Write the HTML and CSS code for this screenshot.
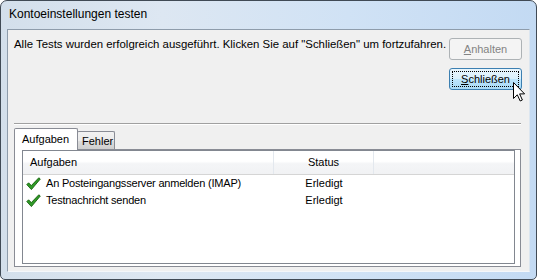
FILE: index.html
```html
<!DOCTYPE html>
<html lang="de">
<head>
<meta charset="utf-8">
<title>Kontoeinstellungen testen</title>
<link rel="stylesheet" href="styles.css">
</head>
<body>
<div class="window">
  <div class="titlebar"><span class="title">Kontoeinstellungen testen</span></div>
  <div class="client">
    <div class="top">
      <p class="message">Alle Tests wurden erfolgreich ausgeführt. Klicken Sie auf "Schließen" um fortzufahren.</p>
      <div class="buttons">
        <button class="btn disabled" disabled><u>A</u>nhalten</button>
        <button class="btn focused"><span class="focus"><u>S</u>chließen</span></button>
      </div>
    </div>
    <div class="sep"></div>
    <div class="tabs">
      <div class="tabstrip">
        <div class="tab active">Aufgaben</div>
        <div class="tab">Fehler</div>
      </div>
      <div class="panel">
        <div class="list">
          <div class="header">
            <div class="hcol c1">Aufgaben</div>
            <div class="hcol c2">Status</div>
            <div class="hcol c3"></div>
          </div>
          <div class="row">
            <div class="cell c1"><svg class="check" width="15" height="14" viewBox="0 0 15 14"><path d="M0.8 7.6 L2.6 5.8 L5.3 8.6 L12.8 0.8 L14.3 2.0 L5.4 12.6 Z" fill="#2f9a27" stroke="#17620f" stroke-width="0.9" stroke-linejoin="round"/></svg><span class="label">An Posteingangsserver anmelden (IMAP)</span></div>
            <div class="cell c2">Erledigt</div>
          </div>
          <div class="row">
            <div class="cell c1"><svg class="check" width="15" height="14" viewBox="0 0 15 14"><path d="M0.8 7.6 L2.6 5.8 L5.3 8.6 L12.8 0.8 L14.3 2.0 L5.4 12.6 Z" fill="#2f9a27" stroke="#17620f" stroke-width="0.9" stroke-linejoin="round"/></svg><span class="label">Testnachricht senden</span></div>
            <div class="cell c2">Erledigt</div>
          </div>
        </div>
      </div>
    </div>
  </div>
  <svg class="cursor" width="13" height="20" viewBox="0 0 13 20"><path d="M0.5 0.5 L0.5 16.5 L4.3 12.8 L7.2 19 L9.4 18 L6.6 11.9 L11.6 11.9 Z" fill="#fff" stroke="#000" stroke-width="1" stroke-linejoin="miter"/></svg>
</div>
</body>
</html>
```
FILE: styles.css
```css
html, body {
  margin: 0;
  padding: 0;
  background: #ffffff;
}

.window {
  position: relative;
  width: 537px;
  height: 280px;
  box-sizing: border-box;
  border: 1px solid #404a55;
  border-radius: 7px 7px 5px 5px;
  padding: 0 6px 7px 6px;
  display: flex;
  flex-direction: column;
  background: linear-gradient(to right, #d3dfeb 0%, #dde7f2 30%, #d0e2f5 65%, #c3daf3 100%);
  overflow: hidden;
}

.titlebar {
  height: 28px;
  display: flex;
  align-items: center;
  padding-left: 2px;
  flex: none;
}

.title {
  font-family: "Liberation Sans", Arial, sans-serif;
  font-size: 12px;
  color: #000;
  position: relative;
  top: -1px;
}

.client {
  flex: 1;
  display: flex;
  flex-direction: column;
  background: #f0f0f0;
  border: 1px solid #8e9cab;
  border-right-color: #dce6f0;
  border-bottom-color: #f4f7fa;
  font-family: "Liberation Sans", Arial, sans-serif;
  font-size: 11px;
  color: #000;
}

.top {
  display: flex;
  justify-content: space-between;
  padding: 7px 7px 0 6px;
  height: 93px;
  box-sizing: border-box;
}

.message {
  margin: 0;
  line-height: 14px;
  white-space: nowrap;
  font-size: 11.4px;
}

.buttons {
  display: flex;
  flex-direction: column;
  gap: 8px;
  margin-top: 1px;
}

.btn {
  width: 73px;
  height: 22px;
  box-sizing: border-box;
  border-radius: 3px;
  font-family: "Liberation Sans", Arial, sans-serif;
  font-size: 11px;
  padding: 0;
  display: flex;
  align-items: center;
  justify-content: center;
}

.btn u {
  text-underline-offset: 1px;
}

.btn.disabled {
  border: 1px solid #adb2b5;
  background: #f4f4f4;
  color: #838383;
}

.btn.focused {
  border: 1px solid #3c7fb1;
  background: linear-gradient(to bottom, #eaf6fd 0%, #d9f0fc 50%, #bee6fd 51%, #a7d9f5 100%);
  color: #000;
  padding: 2px;
}

.focus {
  flex: 1;
  align-self: stretch;
  display: flex;
  align-items: center;
  justify-content: center;
  border: 1px dotted #000;
}

.sep {
  margin: 0 8px 0 6px;
  border-top: 1px solid #a0a0a0;
  border-bottom: 1px solid #ffffff;
  flex: none;
}

.tabs {
  margin: 3px 8px 4px 6px;
  display: flex;
  flex-direction: column;
  flex: 1;
}

.tabstrip {
  display: flex;
  align-items: flex-end;
  height: 21px;
  flex: none;
}

.tab {
  box-sizing: border-box;
  border: 1px solid #898c95;
  border-bottom: none;
  border-radius: 2px 2px 0 0;
}

.tab.active {
  position: relative;
  z-index: 1;
  width: 64px;
  height: 22px;
  margin-bottom: -1px;
  background: #ffffff;
  padding: 3px 0 0 7px;
  line-height: 14px;
}

.tab:not(.active) {
  width: 38px;
  height: 18px;
  margin-left: -1px;
  padding: 2px 0 0 4px;
  line-height: 14px;
  background: linear-gradient(to bottom, #f2f2f2 0%, #ebebeb 50%, #dddddd 51%, #cfcfcf 100%);
}

.panel {
  flex: 1;
  box-sizing: border-box;
  border: 1px solid #898c95;
  background: #ffffff;
  padding: 0 5px 2px 7px;
  display: flex;
}

.list {
  flex: 1;
  border: 1px solid #828790;
  background: #ffffff;
}

.header {
  display: flex;
  height: 23px;
  border-bottom: 1px solid #d5d5d5;
  background: linear-gradient(to bottom, #ffffff 0%, #ffffff 45%, #f4f5f7 55%, #f1f2f4 100%);
}

.hcol {
  box-sizing: border-box;
  line-height: 22px;
  border-right: 1px solid #e3e8ee;
}

.c1 {
  width: 251px;
  padding-left: 7px;
  box-sizing: border-box;
}

.c2 {
  width: 100px;
  text-align: center;
  box-sizing: border-box;
}

.c3 {
  flex: 1;
  border-right: none;
}

.row {
  display: flex;
  height: 17px;
  line-height: 17px;
}

.row:first-of-type {
  margin-top: 1px;
}

.row .c1 {
  display: flex;
  align-items: center;
  padding-left: 3px;
}

.label {
  letter-spacing: -0.2px;
}

.check {
  margin-right: 5px;
  flex: none;
}

.cursor {
  position: absolute;
  left: 512px;
  top: 81px;
}
```
